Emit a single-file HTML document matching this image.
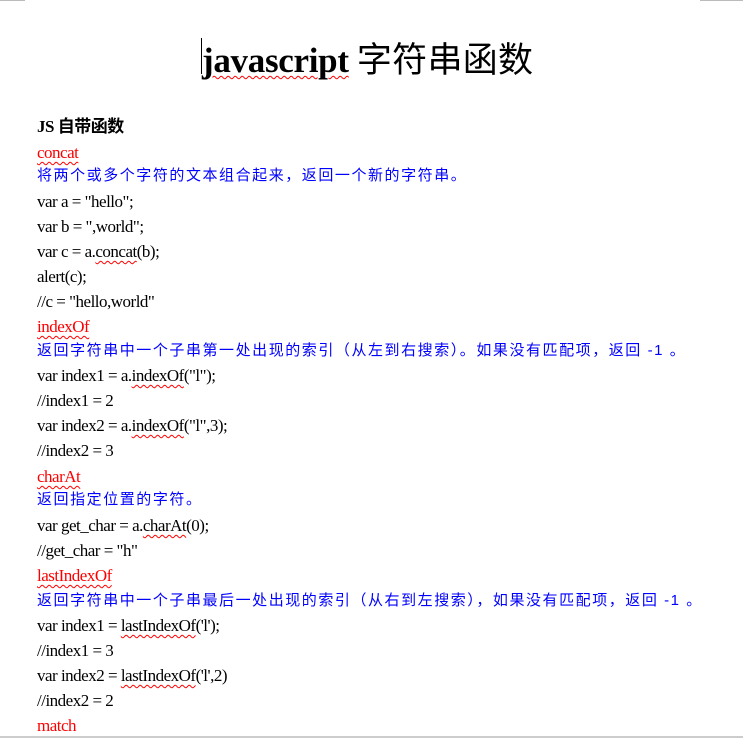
<!DOCTYPE html>
<html><head><meta charset="utf-8"><style>
html,body{margin:0;padding:0;background:#fff;width:743px;height:738px;overflow:hidden;position:relative}
.l{position:absolute;left:37px;height:22px;line-height:22px;white-space:nowrap;font-family:"Liberation Serif","Noto Serif CJK SC",serif;font-size:17px;color:#000;letter-spacing:-0.5px}
.r{color:#f00}
.b{color:#00f;font-family:"Liberation Sans","Noto Sans CJK SC",sans-serif;font-size:15px;letter-spacing:1.55px}
.w{text-decoration:underline wavy #f00;text-decoration-thickness:1px;text-underline-offset:3px}
.t{position:absolute;top:35px;left:202px;height:46px;line-height:46px;white-space:nowrap;font-size:35px;color:#000}
.corner{position:absolute;top:0;height:1px;background:#bbb}
</style></head><body>
<div class="corner" style="left:0;width:25px"></div>
<div class="corner" style="left:700px;width:43px"></div>
<div style="position:absolute;left:201px;top:38px;width:1px;height:36px;background:#000"></div>
<div class="t"><span class="w" style="font-family:'Liberation Serif',serif;font-weight:bold;letter-spacing:-0.3px">javascript</span><span style="font-family:'Noto Sans CJK SC',sans-serif;letter-spacing:0.3px"> 字符串函数</span></div>
<div class="l" style="top:116px;font-weight:bold;font-family:'Liberation Serif','Noto Sans CJK SC',serif">JS 自带函数</div>
<div class="l r" style="top:142px"><span class="w">concat</span></div>
<div class="l b" style="top:165px">将两个或多个字符的文本组合起来，返回一个新的字符串。</div>
<div class="l" style="top:191px">var a = "hello";</div>
<div class="l" style="top:216px">var b = ",world";</div>
<div class="l" style="top:241px">var c = a.<span class="w">concat</span>(b);</div>
<div class="l" style="top:266px">alert(c);</div>
<div class="l" style="top:291px">//c = "hello,world"</div>
<div class="l r" style="top:316px"><span class="w">indexOf</span></div>
<div class="l b" style="top:340px">返回字符串中一个子串第一处出现的索引（从左到右搜索）。如果没有匹配项，返回 -1 。</div>
<div class="l" style="top:365px">var index1 = a.<span class="w">indexOf</span>("l");</div>
<div class="l" style="top:390px">//index1 = 2</div>
<div class="l" style="top:415px">var index2 = a.<span class="w">indexOf</span>("l",3);</div>
<div class="l" style="top:440px">//index2 = 3</div>
<div class="l r" style="top:466px"><span class="w">charAt</span></div>
<div class="l b" style="top:489px">返回指定位置的字符。</div>
<div class="l" style="top:515px">var get_char = a.<span class="w">charAt</span>(0);</div>
<div class="l" style="top:540px">//get_char = "h"</div>
<div class="l r" style="top:565px"><span class="w">lastIndexOf</span></div>
<div class="l b" style="top:590px">返回字符串中一个子串最后一处出现的索引（从右到左搜索），如果没有匹配项，返回 -1 。</div>
<div class="l" style="top:615px">var index1 = <span class="w">lastIndexOf</span>('l');</div>
<div class="l" style="top:640px">//index1 = 3</div>
<div class="l" style="top:665px">var index2 = <span class="w">lastIndexOf</span>('l',2)</div>
<div class="l" style="top:690px">//index2 = 2</div>
<div class="l r" style="top:715px">match</div>
<div style="position:absolute;left:0;top:736px;width:743px;height:2px;background:#ccc"></div>
</body></html>
